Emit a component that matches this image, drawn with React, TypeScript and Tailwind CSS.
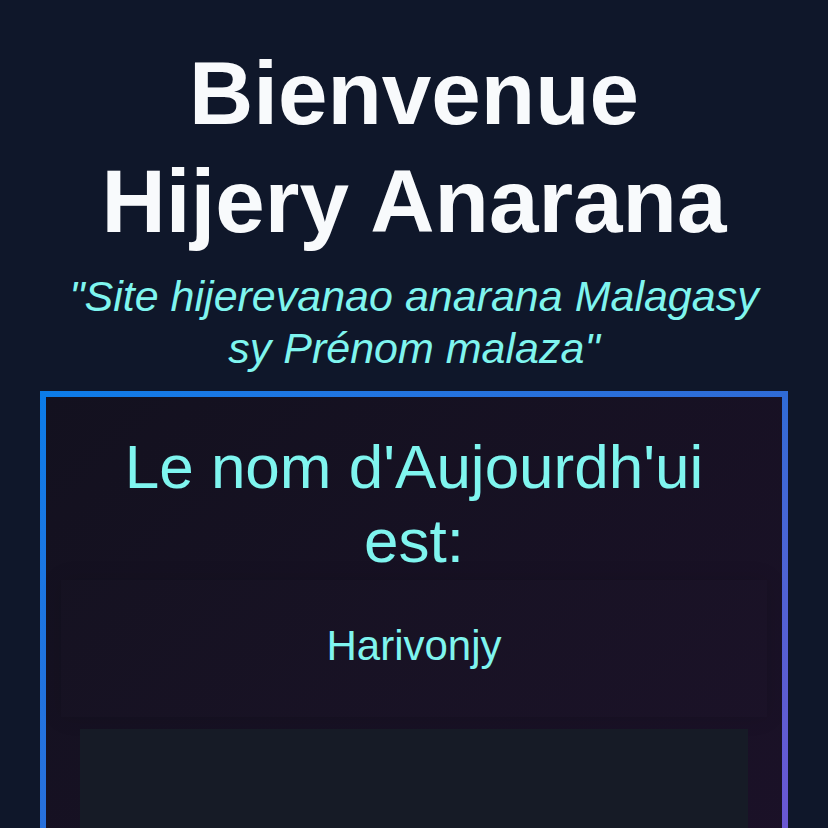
import React from "react";

export default function App() {
  return (
    <div className="min-h-screen bg-[#0f172a] px-10 pt-[39px] text-center font-['Liberation_Sans',Arial,sans-serif]">
      <h1 className="text-[89px] leading-[108px] font-bold text-[#f8fafc]">
        Bienvenue
        <br />
        Hijery Anarana
      </h1>
      <p className="mt-[15px] text-[43px] leading-[52px] italic text-[#7ff5ef]">
        "Site hijerevanao anarana Malagasy
        <br />
        sy Prénom malaza"
      </p>
      <div className="mt-[17px] bg-gradient-to-br from-[#0a7ce8] via-[#2f6bd6] to-[#7c4ad0] p-[6px]">
        <div className="bg-gradient-to-br from-[#13111f] to-[#1c1129] pt-[33px] pb-10">
          <h2 className="text-[62px] leading-[1.2] text-[#7ff5ef]">
            Le nom d'Aujourdh'ui
            <br />
            est:
          </h2>
          <div className="mx-[15px] mt-[1px] bg-white/[0.004] pt-[41px] pb-[46px] shadow-[0_0_20px_rgba(0,0,0,0.12)]">
            <p className="text-[42px] leading-[1.2] text-[#7ff5ef]">Harivonjy</p>
          </div>
          <div className="mx-[34px] mt-[12px] h-[260px] bg-[#161b26]"></div>
        </div>
      </div>
    </div>
  );
}
